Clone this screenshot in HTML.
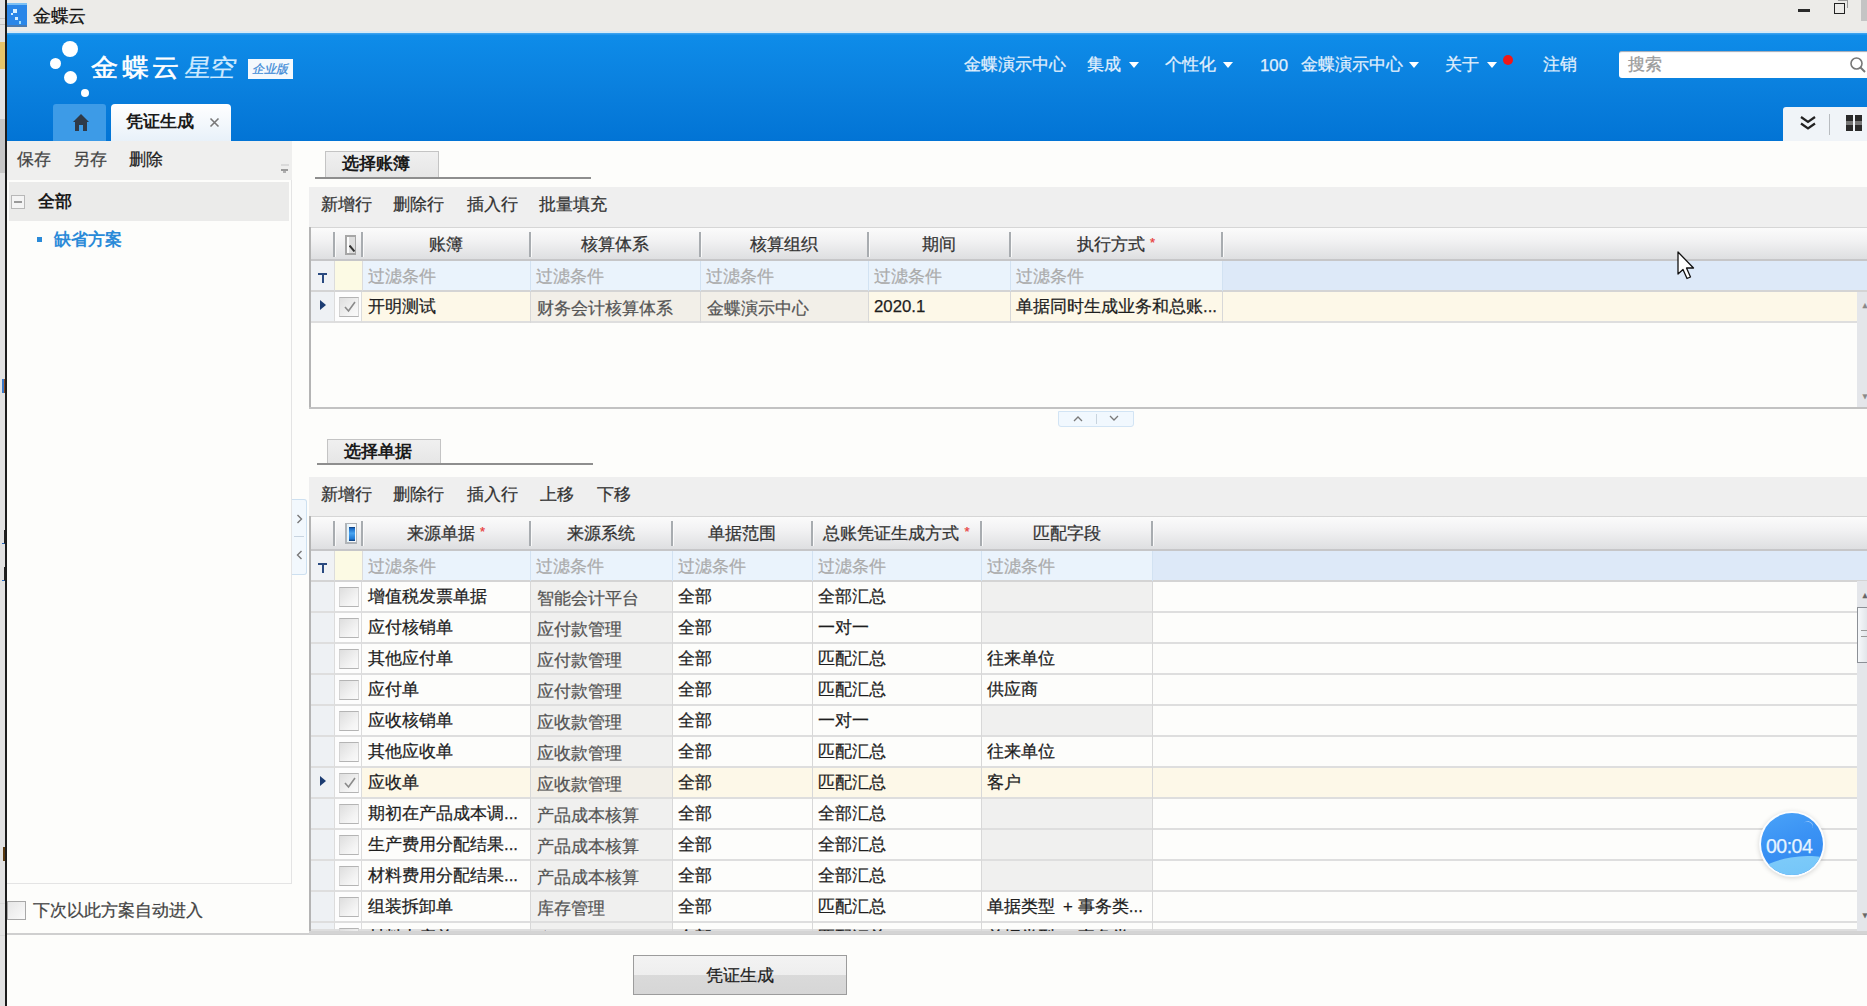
<!DOCTYPE html>
<html><head><meta charset="utf-8">
<style>
*{margin:0;padding:0;box-sizing:border-box}
html,body{width:1867px;height:1006px;overflow:hidden}
body{position:relative;background:#fdfdfb;font-family:"Liberation Sans",sans-serif;font-size:16.8px;color:#222}
.a{position:absolute}
.t{position:absolute;white-space:nowrap;line-height:1;-webkit-text-stroke:0.25px currentColor}
</style></head><body>

<!-- far-left background strip + window border -->
<div class="a" style="left:0;top:0;width:5px;height:1006px;background:#e2e2e2"></div>
<div class="a" style="left:0;top:42px;width:5px;height:27px;background:#e6c46a"></div><div class="a" style="left:0;top:119px;width:5px;height:54px;background:#c6c6c6"></div><div class="a" style="left:0;top:18px;width:5px;height:1px;background:#c4c4c4"></div><div class="a" style="left:0;top:24px;width:5px;height:1px;background:#c4c4c4"></div><div class="a" style="left:2px;top:379px;width:2px;height:14px;background:#3a78c8"></div><div class="a" style="left:4px;top:379px;width:1px;height:14px;background:#8a4a20"></div><div class="a" style="left:2px;top:530px;width:3px;height:14px;border-right:1px solid #222;border-bottom:1px solid #2a6ac0"></div><div class="a" style="left:2px;top:567px;width:3px;height:14px;border-right:1px solid #222;border-bottom:1px solid #2a6ac0"></div><div class="a" style="left:3px;top:847px;width:2px;height:14px;background:#5a3a10"></div><div class="a" style="left:0;top:903px;width:5px;height:1px;background:#d8d8d8"></div><div class="a" style="left:0;top:935px;width:5px;height:1px;background:#d8d8d8"></div>
<div class="a" style="left:5px;top:0;width:2px;height:1006px;background:#1c1c1c"></div>

<!-- title bar -->
<div class="a" style="left:7px;top:0;width:1860px;height:31px;background:#ecebe8"></div>
<div class="a" style="left:7px;top:31px;width:1860px;height:2px;background:#d6eaf6"></div>
<div class="a" style="left:7px;top:3px;width:20px;height:24px;background:linear-gradient(#7cc0f4 0,#7cc0f4 2px,#2a86e8 2px,#2a86e8 22px,#4a7ab0 22px)"></div><div class="a" style="left:13px;top:9px;width:4px;height:4px;background:#d8f0ff"></div><div class="a" style="left:11px;top:13px;width:2px;height:2px;background:#d8f0ff"></div><div class="a" style="left:15px;top:17px;width:3px;height:3px;background:#d8f0ff"></div><div class="a" style="left:19px;top:21px;width:2px;height:3px;background:#9ee0ff"></div>
<div class="t" style="left:33px;top:7px;font-size:18px;color:#111;letter-spacing:-0.3px">金蝶云</div>
<div class="a" style="left:1798px;top:9px;width:12px;height:3px;background:#2a2a2a"></div>
<div class="a" style="left:1838px;top:0px;width:10px;height:8px;border:1.5px solid #999;border-bottom:none;border-left:none"></div><div class="a" style="left:1834px;top:3px;width:11px;height:11px;border:1.5px solid #222;background:#ecebe8"></div>
<div class="a" style="left:1861px;top:0;width:6px;height:21px;background:#c4c4c4"></div>

<!-- blue header -->
<div class="a" style="left:7px;top:33px;width:1860px;height:108px;background:linear-gradient(#3aa2f0 0,#3aa2f0 1px,#0e8ce9 2px,#0a80de 50%,#0274d5 100%)"></div>


<!-- logo dots -->
<div class="a" style="left:62px;top:41px;width:16px;height:16px;border-radius:50%;background:#fff"></div>
<div class="a" style="left:50px;top:58px;width:11px;height:11px;border-radius:50%;background:#fff"></div>
<div class="a" style="left:64px;top:71px;width:13px;height:13px;border-radius:50%;background:#fff"></div>
<div class="a" style="left:81px;top:89px;width:8px;height:8px;border-radius:50%;background:#fff"></div>
<div class="t" style="left:91px;top:54px;font-size:27px;color:#fff;letter-spacing:3.5px;-webkit-text-stroke:0.6px #fff;transform:scaleY(0.92);transform-origin:0 80%">金蝶云</div>
<div class="t" style="left:184px;top:54px;font-size:26px;color:#cfeaff;letter-spacing:-1px;transform:skewX(-10deg) scaleY(0.93);transform-origin:0 80%;-webkit-text-stroke:0.3px #cfeaff">星空</div>
<div class="a" style="left:248px;top:59px;width:45px;height:20px;background:#f4f9fd"></div>
<div class="t" style="left:252px;top:63px;font-size:12px;color:#3d8ad6;font-style:italic">企业版</div>

<!-- nav -->
<div class="t" style="left:964px;top:57px;font-size:16.8px;color:#e2f0fd">金蝶演示中心</div>
<div class="t" style="left:1087px;top:57px;font-size:16.8px;color:#e2f0fd">集成</div>
<div class="a" style="left:1129px;top:62px;width:0;height:0;border-left:5.5px solid transparent;border-right:5.5px solid transparent;border-top:6px solid #fff"></div>
<div class="t" style="left:1165px;top:57px;font-size:16.8px;color:#e2f0fd">个性化</div>
<div class="a" style="left:1223px;top:62px;width:0;height:0;border-left:5.5px solid transparent;border-right:5.5px solid transparent;border-top:6px solid #fff"></div>
<div class="t" style="left:1260px;top:58px;font-size:16.8px;color:#e2f0fd">100</div>
<div class="t" style="left:1301px;top:57px;font-size:16.8px;color:#e2f0fd">金蝶演示中心</div>
<div class="a" style="left:1409px;top:62px;width:0;height:0;border-left:5.5px solid transparent;border-right:5.5px solid transparent;border-top:6px solid #fff"></div>
<div class="t" style="left:1445px;top:57px;font-size:16.8px;color:#e2f0fd">关于</div>
<div class="a" style="left:1487px;top:62px;width:0;height:0;border-left:5.5px solid transparent;border-right:5.5px solid transparent;border-top:6px solid #fff"></div>
<div class="a" style="left:1503px;top:55px;width:10px;height:10px;border-radius:50%;background:#f01818"></div>
<div class="t" style="left:1543px;top:57px;font-size:16.8px;color:#e2f0fd">注销</div>

<!-- search -->
<div class="a" style="left:1619px;top:51px;width:248px;height:27px;background:#fff;border-radius:3px 0 0 3px;box-shadow:inset 0 2px 1px -1px rgba(40,60,90,.45)"></div>
<div class="t" style="left:1628px;top:57px;font-size:16.8px;color:#9a9a9a">搜索</div>
<svg class="a" style="left:1849px;top:56px" width="18" height="18" viewBox="0 0 18 18"><circle cx="7.5" cy="7.5" r="5.5" fill="none" stroke="#777" stroke-width="1.6"/><line x1="11.5" y1="11.5" x2="16" y2="16" stroke="#777" stroke-width="2"/></svg>

<!-- tabs -->
<div class="a" style="left:53px;top:104px;width:53px;height:37px;background:#3d9be7;border-radius:3px 3px 0 0"></div>
<svg class="a" style="left:73px;top:114px" width="16" height="17" viewBox="0 0 16 17"><path d="M8 0 L0 8 L2 8 L2 17 L6 17 L6 11 L10 11 L10 17 L14 17 L14 8 L16 8 Z" fill="#2f3a48"/></svg>
<div class="a" style="left:111px;top:104px;width:120px;height:37px;background:linear-gradient(#ffffff,#e8f1f9);border-radius:4px 4px 0 0"></div>
<div class="t" style="left:126px;top:114px;font-size:16.8px;color:#1a1a1a;font-weight:bold;-webkit-text-stroke:0">凭证生成</div>
<svg class="a" style="left:209px;top:117px" width="11" height="11" viewBox="0 0 11 11"><path d="M1.5 1.5 L9.5 9.5 M9.5 1.5 L1.5 9.5" stroke="#777" stroke-width="1.6"/></svg>

<!-- right tool box -->
<div class="a" style="left:1783px;top:107px;width:84px;height:34px;background:#f0f4f8;border-radius:3px 0 0 0"></div>
<svg class="a" style="left:1800px;top:116px" width="16" height="15" viewBox="0 0 16 15"><path d="M1 1 L8 6 L15 1 M1 7.5 L8 12.5 L15 7.5" fill="none" stroke="#222" stroke-width="2.2"/></svg>
<div class="a" style="left:1829px;top:114px;width:1px;height:21px;background:#b8bcc0"></div>
<div class="a" style="left:1846px;top:115px;width:7px;height:16px;background:linear-gradient(#2a2a2a 40%,#777 40%,#777 60%,#2a2a2a 60%)"></div>
<div class="a" style="left:1855px;top:115px;width:7px;height:16px;background:linear-gradient(#2a2a2a 40%,#777 40%,#777 60%,#2a2a2a 60%)"></div>


<!-- LEFT PANEL -->
<div class="a" style="left:7px;top:141px;width:285px;height:39px;background:#efefee"></div>
<div class="t" style="left:17px;top:152px;color:#444">保存</div>
<div class="t" style="left:73px;top:152px;color:#444">另存</div>
<div class="t" style="left:129px;top:152px;color:#222">删除</div>
<div class="a" style="left:281px;top:164px;width:8px;height:2px;background:#dadada"></div><div class="a" style="left:281px;top:169px;width:7px;height:2px;background:#9a9a9a"></div><div class="a" style="left:283px;top:171px;width:3px;height:2px;background:#b0b0b0"></div>
<div class="a" style="left:7px;top:180px;width:285px;height:704px;border:1px solid #e4e4e4;border-top:none;border-left:none;background:#fdfdfb"></div>
<div class="a" style="left:9px;top:182px;width:280px;height:39px;background:#ebebea"></div>
<div class="a" style="left:11px;top:195px;width:14px;height:14px;border:1px solid #b8b8b8;background:#f4f4f4"></div>
<div class="a" style="left:14px;top:201px;width:8px;height:2px;background:#9a9a9a"></div>
<div class="t" style="left:38px;top:194px;color:#1a1a1a;font-weight:bold;-webkit-text-stroke:0">全部</div>
<div class="a" style="left:37px;top:237px;width:5px;height:5px;background:#2a8ad8"></div>
<div class="t" style="left:54px;top:232px;color:#2a8ad8;font-weight:bold;-webkit-text-stroke:0">缺省方案</div>
<div class="a" style="left:7px;top:901px;width:19px;height:19px;border:1px solid #a8a8a8;background:linear-gradient(135deg,#e6e6e6,#fafafa)"></div>
<div class="t" style="left:33px;top:903px;color:#444">下次以此方案自动进入</div>
<div class="a" style="left:7px;top:933px;width:1860px;height:2px;background:#cfcfcf"></div>

<!-- collapse side buttons -->
<div class="a" style="left:292px;top:499px;width:15px;height:76px;border:1px solid #cde0f0;border-left:none;background:#f2f8fd;border-radius:0 3px 3px 0"></div>
<svg class="a" style="left:296px;top:514px" width="7" height="10" viewBox="0 0 7 10"><path d="M1.5 1 L5.5 5 L1.5 9" fill="none" stroke="#777" stroke-width="1.4"/></svg>
<div class="a" style="left:294px;top:536px;width:10px;height:1px;background:#c8d4e0"></div>
<svg class="a" style="left:296px;top:550px" width="7" height="10" viewBox="0 0 7 10"><path d="M5.5 1 L1.5 5 L5.5 9" fill="none" stroke="#777" stroke-width="1.4"/></svg>

<!-- GRIDS -->
<div class="a" style="left:325px;top:151px;width:114px;height:26px;background:linear-gradient(#f0f0f0,#e6e6e6);border:1px solid #c4c4c4;border-bottom:none"></div>
<div class="t" style="left:342px;top:156px;color:#1a1a1a;font-weight:bold;-webkit-text-stroke:0">选择账簿</div>
<div class="a" style="left:315px;top:177px;width:276px;height:2px;background:#8e8e8e"></div>
<div class="a" style="left:309px;top:187px;width:1558px;height:40px;background:#efefef"></div>
<div class="t" style="left:321px;top:197px;color:#333">新增行</div>
<div class="t" style="left:393px;top:197px;color:#333">删除行</div>
<div class="t" style="left:467px;top:197px;color:#333">插入行</div>
<div class="t" style="left:539px;top:197px;color:#333">批量填充</div>
<div class="a" style="left:309px;top:227px;width:1558px;height:34px;background:linear-gradient(#fbfbfb,#f2f2f3 40%,#dedfe1);border-top:1px solid #d6d6d6;border-bottom:2px solid #c6c6c8"></div>
<div class="a" style="left:333px;top:232px;width:3px;height:25px;background:linear-gradient(90deg,#a8acb0 66%,#fafafa 66%)"></div>
<div class="a" style="left:361px;top:232px;width:3px;height:25px;background:linear-gradient(90deg,#a8acb0 66%,#fafafa 66%)"></div>
<div class="a" style="left:529px;top:232px;width:3px;height:25px;background:linear-gradient(90deg,#a8acb0 66%,#fafafa 66%)"></div>
<div class="a" style="left:699px;top:232px;width:3px;height:25px;background:linear-gradient(90deg,#a8acb0 66%,#fafafa 66%)"></div>
<div class="a" style="left:867px;top:232px;width:3px;height:25px;background:linear-gradient(90deg,#a8acb0 66%,#fafafa 66%)"></div>
<div class="a" style="left:1009px;top:232px;width:3px;height:25px;background:linear-gradient(90deg,#a8acb0 66%,#fafafa 66%)"></div>
<div class="a" style="left:1221px;top:232px;width:3px;height:25px;background:linear-gradient(90deg,#a8acb0 66%,#fafafa 66%)"></div>
<div class="a" style="left:345px;top:235px;width:11px;height:20px;border:2px solid #a6a6a6;border-right-width:1px;background:linear-gradient(90deg,#fdfdfd 0,#fdfdfd 2px,#dedede 2px)"></div>
<svg class="a" style="left:349px;top:245px" width="6" height="7" viewBox="0 0 6 7"><path d="M0.5 0.5 L5.5 6.5" stroke="#333" stroke-width="2"/></svg>
<div class="t" style="left:362px;width:168px;top:237px;text-align:center;color:#333">账簿</div>
<div class="t" style="left:530px;width:170px;top:237px;text-align:center;color:#333">核算体系</div>
<div class="t" style="left:700px;width:168px;top:237px;text-align:center;color:#333">核算组织</div>
<div class="t" style="left:868px;width:142px;top:237px;text-align:center;color:#333">期间</div>
<div class="t" style="left:1010px;width:212px;top:237px;text-align:center;color:#333">执行方式<span style="color:#e84040;font-size:13px;position:relative;top:-3px;margin-left:5px">*</span></div>
<div class="a" style="left:310px;top:261px;width:1557px;height:31px;background:#dde9f8;border-bottom:2px solid #d4d4d4"></div>
<div class="a" style="left:310px;top:261px;width:24px;height:31px;background:#f0f2f5;border-bottom:2px solid #d4d4d4"></div>
<div class="a" style="left:334px;top:261px;width:28px;height:31px;background:#fcfae4;border-left:1px solid #dcdcdc;border-bottom:2px solid #d4d4d4"></div>
<div class="a" style="left:362px;top:261px;width:860px;height:31px;background:#eaf3fc;border-left:1px solid #dcdcdc;border-bottom:2px solid #d4d4d4"></div>
<div class="a" style="left:530px;top:261px;width:1px;height:30px;background:#d2e2f2"></div>
<div class="a" style="left:700px;top:261px;width:1px;height:30px;background:#d2e2f2"></div>
<div class="a" style="left:868px;top:261px;width:1px;height:30px;background:#d2e2f2"></div>
<div class="a" style="left:1010px;top:261px;width:1px;height:30px;background:#d2e2f2"></div>
<div class="a" style="left:1222px;top:261px;width:1px;height:30px;background:#d2e2f2"></div>
<div class="a" style="left:318px;top:273px;width:9px;height:2px;background:#2a4a80"></div>
<div class="a" style="left:322px;top:273px;width:1.5px;height:10px;background:#2a4a80"></div>
<div class="t" style="left:368px;top:269px;color:#ababab">过滤条件</div>
<div class="t" style="left:536px;top:269px;color:#ababab">过滤条件</div>
<div class="t" style="left:706px;top:269px;color:#ababab">过滤条件</div>
<div class="t" style="left:874px;top:269px;color:#ababab">过滤条件</div>
<div class="t" style="left:1016px;top:269px;color:#ababab">过滤条件</div>
<div class="a" style="left:0;top:292px;width:1867px;height:115px;overflow:hidden"><div class="a" style="left:0;top:-292px;width:1867px;height:1006px">
<div class="a" style="left:310px;top:292px;width:1547px;height:31px;background:#fdf8e8;border-bottom:2px solid #dedede;overflow:hidden"></div>
<div class="a" style="left:310px;top:292px;width:24px;height:31px;background:#eef1f4;border-bottom:2px solid #dedede"></div>
<div class="a" style="left:334px;top:292px;width:28px;height:31px;background:#fdfdfd;border-left:1px solid #dcdcdc;border-right:1px solid #dcdcdc;border-bottom:2px solid #dedede"></div>
<div class="a" style="left:530px;top:292px;width:170px;height:31px;background:#f2efe8;border-bottom:2px solid #dedede"></div>
<div class="a" style="left:700px;top:292px;width:168px;height:31px;background:#f2efe8;border-bottom:2px solid #dedede"></div>
<div class="a" style="left:530px;top:292px;width:1px;height:31px;background:#d8d8d8"></div>
<div class="a" style="left:700px;top:292px;width:1px;height:31px;background:#d8d8d8"></div>
<div class="a" style="left:868px;top:292px;width:1px;height:31px;background:#d8d8d8"></div>
<div class="a" style="left:1010px;top:292px;width:1px;height:31px;background:#d8d8d8"></div>
<div class="a" style="left:1222px;top:292px;width:1px;height:31px;background:#d8d8d8"></div>
<div class="a" style="left:339px;top:297px;width:20px;height:20px;border:1px solid #d4d4d4;border-top-color:#b4b4b4;border-bottom-color:#b4b4b4;background:linear-gradient(135deg,#dedede,#f4f4f4 70%,#fafafa)"></div>
<svg class="a" style="left:343px;top:300px" width="14" height="14" viewBox="0 0 14 14"><path d="M2 7 L5.5 11 L12 2" fill="none" stroke="#8a8a8a" stroke-width="1.6"/></svg>
<div class="a" style="left:320px;top:300px;width:0;height:0;border-top:5px solid transparent;border-bottom:5px solid transparent;border-left:6px solid #1c3c72"></div>
<div class="t" style="left:368px;top:299px;color:#1e1e1e">开明测试</div>
<div class="t" style="left:537px;top:301px;color:#555">财务会计核算体系</div>
<div class="t" style="left:707px;top:301px;color:#555">金蝶演示中心</div>
<div class="t" style="left:874px;top:299px;color:#1e1e1e">2020.1</div>
<div class="t" style="left:1016px;top:299px;color:#1e1e1e">单据同时生成业务和总账...</div>
</div></div>
<div class="a" style="left:309px;top:227px;width:2px;height:181px;background:#b4b4b4"></div>
<div class="a" style="left:309px;top:407px;width:1558px;height:2px;background:#c2c2c2"></div>
<div class="a" style="left:1857px;top:292px;width:10px;height:115px;background:#e4e6ea"></div>
<div class="t" style="left:1861px;top:302px;font-size:8px;color:#888">▲</div>
<div class="t" style="left:1861px;top:393px;font-size:8px;color:#888">▼</div>
<div class="a" style="left:1058px;top:411px;width:76px;height:16px;border:1px solid #d2e4f4;background:#f1f8fe;border-radius:0 0 3px 3px"></div>
<svg class="a" style="left:1073px;top:415px" width="10" height="7" viewBox="0 0 10 7"><path d="M1 6 L5 2 L9 6" fill="none" stroke="#7a7a7a" stroke-width="1.3"/></svg>
<div class="a" style="left:1096px;top:414px;width:1px;height:10px;background:#c8d4de"></div>
<svg class="a" style="left:1109px;top:415px" width="10" height="7" viewBox="0 0 10 7"><path d="M1 1 L5 5 L9 1" fill="none" stroke="#7a7a7a" stroke-width="1.3"/></svg>
<div class="a" style="left:327px;top:439px;width:114px;height:24px;background:linear-gradient(#f0f0f0,#e6e6e6);border:1px solid #c4c4c4;border-bottom:none"></div>
<div class="t" style="left:344px;top:444px;color:#1a1a1a;font-weight:bold;-webkit-text-stroke:0">选择单据</div>
<div class="a" style="left:317px;top:463px;width:276px;height:2px;background:#8e8e8e"></div>
<div class="a" style="left:309px;top:477px;width:1558px;height:40px;background:#efefef"></div>
<div class="t" style="left:321px;top:487px;color:#333">新增行</div>
<div class="t" style="left:393px;top:487px;color:#333">删除行</div>
<div class="t" style="left:467px;top:487px;color:#333">插入行</div>
<div class="t" style="left:540px;top:487px;color:#333">上移</div>
<div class="t" style="left:597px;top:487px;color:#333">下移</div>
<div class="a" style="left:309px;top:516px;width:1558px;height:35px;background:linear-gradient(#fbfbfb,#f2f2f3 40%,#dedfe1);border-top:1px solid #d6d6d6;border-bottom:2px solid #c6c6c8"></div>
<div class="a" style="left:333px;top:521px;width:3px;height:25px;background:linear-gradient(90deg,#a8acb0 66%,#fafafa 66%)"></div>
<div class="a" style="left:361px;top:521px;width:3px;height:25px;background:linear-gradient(90deg,#a8acb0 66%,#fafafa 66%)"></div>
<div class="a" style="left:529px;top:521px;width:3px;height:25px;background:linear-gradient(90deg,#a8acb0 66%,#fafafa 66%)"></div>
<div class="a" style="left:671px;top:521px;width:3px;height:25px;background:linear-gradient(90deg,#a8acb0 66%,#fafafa 66%)"></div>
<div class="a" style="left:811px;top:521px;width:3px;height:25px;background:linear-gradient(90deg,#a8acb0 66%,#fafafa 66%)"></div>
<div class="a" style="left:980px;top:521px;width:3px;height:25px;background:linear-gradient(90deg,#a8acb0 66%,#fafafa 66%)"></div>
<div class="a" style="left:1151px;top:521px;width:3px;height:25px;background:linear-gradient(90deg,#a8acb0 66%,#fafafa 66%)"></div>
<div class="a" style="left:345px;top:523px;width:12px;height:21px;border:1px solid #b0b4b8;border-left-width:2px;border-bottom-width:2px;background:linear-gradient(90deg,#e4f4fc 0,#e4f4fc 2px,#f4f8fb 2px)"></div>
<div class="a" style="left:349px;top:527px;width:6px;height:14px;background:linear-gradient(#0c3670 0,#1a6cc8 12%,#4aa4f0 45%,#1e78d4 85%,#0c3670 100%)"></div>
<div class="t" style="left:362px;width:168px;top:526px;text-align:center;color:#333">来源单据<span style="color:#e84040;font-size:13px;position:relative;top:-3px;margin-left:5px">*</span></div>
<div class="t" style="left:530px;width:142px;top:526px;text-align:center;color:#333">来源系统</div>
<div class="t" style="left:672px;width:140px;top:526px;text-align:center;color:#333">单据范围</div>
<div class="t" style="left:812px;width:169px;top:526px;text-align:center;color:#333">总账凭证生成方式<span style="color:#e84040;font-size:13px;position:relative;top:-3px;margin-left:5px">*</span></div>
<div class="t" style="left:981px;width:171px;top:526px;text-align:center;color:#333">匹配字段</div>
<div class="a" style="left:310px;top:551px;width:1557px;height:31px;background:#dde9f8;border-bottom:2px solid #d4d4d4"></div>
<div class="a" style="left:310px;top:551px;width:24px;height:31px;background:#f0f2f5;border-bottom:2px solid #d4d4d4"></div>
<div class="a" style="left:334px;top:551px;width:28px;height:31px;background:#fcfae4;border-left:1px solid #dcdcdc;border-bottom:2px solid #d4d4d4"></div>
<div class="a" style="left:362px;top:551px;width:790px;height:31px;background:#eaf3fc;border-left:1px solid #dcdcdc;border-bottom:2px solid #d4d4d4"></div>
<div class="a" style="left:530px;top:551px;width:1px;height:30px;background:#d2e2f2"></div>
<div class="a" style="left:672px;top:551px;width:1px;height:30px;background:#d2e2f2"></div>
<div class="a" style="left:812px;top:551px;width:1px;height:30px;background:#d2e2f2"></div>
<div class="a" style="left:981px;top:551px;width:1px;height:30px;background:#d2e2f2"></div>
<div class="a" style="left:1152px;top:551px;width:1px;height:30px;background:#d2e2f2"></div>
<div class="a" style="left:318px;top:563px;width:9px;height:2px;background:#2a4a80"></div>
<div class="a" style="left:322px;top:563px;width:1.5px;height:10px;background:#2a4a80"></div>
<div class="t" style="left:368px;top:559px;color:#ababab">过滤条件</div>
<div class="t" style="left:536px;top:559px;color:#ababab">过滤条件</div>
<div class="t" style="left:678px;top:559px;color:#ababab">过滤条件</div>
<div class="t" style="left:818px;top:559px;color:#ababab">过滤条件</div>
<div class="t" style="left:987px;top:559px;color:#ababab">过滤条件</div>
<div class="a" style="left:0;top:582px;width:1867px;height:349px;overflow:hidden"><div class="a" style="left:0;top:-582px;width:1867px;height:1006px">
<div class="a" style="left:310px;top:582px;width:1547px;height:31px;background:#fdfdfb;border-bottom:2px solid #dedede;overflow:hidden"></div>
<div class="a" style="left:310px;top:582px;width:24px;height:31px;background:#eef1f4;border-bottom:2px solid #dedede"></div>
<div class="a" style="left:334px;top:582px;width:28px;height:31px;background:#fdfdfd;border-left:1px solid #dcdcdc;border-right:1px solid #dcdcdc;border-bottom:2px solid #dedede"></div>
<div class="a" style="left:530px;top:582px;width:142px;height:31px;background:#f0f0ef;border-bottom:2px solid #dedede"></div>
<div class="a" style="left:981px;top:582px;width:171px;height:31px;background:#f0f0ef;border-bottom:2px solid #dedede"></div>
<div class="a" style="left:530px;top:582px;width:1px;height:31px;background:#d8d8d8"></div>
<div class="a" style="left:672px;top:582px;width:1px;height:31px;background:#d8d8d8"></div>
<div class="a" style="left:812px;top:582px;width:1px;height:31px;background:#d8d8d8"></div>
<div class="a" style="left:981px;top:582px;width:1px;height:31px;background:#d8d8d8"></div>
<div class="a" style="left:1152px;top:582px;width:1px;height:31px;background:#d8d8d8"></div>
<div class="a" style="left:339px;top:587px;width:20px;height:20px;border:1px solid #d4d4d4;border-top-color:#b4b4b4;border-bottom-color:#b4b4b4;background:linear-gradient(135deg,#dedede,#f4f4f4 70%,#fafafa)"></div>
<div class="t" style="left:368px;top:589px;color:#1e1e1e">增值税发票单据</div>
<div class="t" style="left:537px;top:591px;color:#555">智能会计平台</div>
<div class="t" style="left:678px;top:589px;color:#1e1e1e">全部</div>
<div class="t" style="left:818px;top:589px;color:#1e1e1e">全部汇总</div>
<div class="a" style="left:310px;top:613px;width:1547px;height:31px;background:#fdfdfb;border-bottom:2px solid #dedede;overflow:hidden"></div>
<div class="a" style="left:310px;top:613px;width:24px;height:31px;background:#eef1f4;border-bottom:2px solid #dedede"></div>
<div class="a" style="left:334px;top:613px;width:28px;height:31px;background:#fdfdfd;border-left:1px solid #dcdcdc;border-right:1px solid #dcdcdc;border-bottom:2px solid #dedede"></div>
<div class="a" style="left:530px;top:613px;width:142px;height:31px;background:#f0f0ef;border-bottom:2px solid #dedede"></div>
<div class="a" style="left:981px;top:613px;width:171px;height:31px;background:#f0f0ef;border-bottom:2px solid #dedede"></div>
<div class="a" style="left:530px;top:613px;width:1px;height:31px;background:#d8d8d8"></div>
<div class="a" style="left:672px;top:613px;width:1px;height:31px;background:#d8d8d8"></div>
<div class="a" style="left:812px;top:613px;width:1px;height:31px;background:#d8d8d8"></div>
<div class="a" style="left:981px;top:613px;width:1px;height:31px;background:#d8d8d8"></div>
<div class="a" style="left:1152px;top:613px;width:1px;height:31px;background:#d8d8d8"></div>
<div class="a" style="left:339px;top:618px;width:20px;height:20px;border:1px solid #d4d4d4;border-top-color:#b4b4b4;border-bottom-color:#b4b4b4;background:linear-gradient(135deg,#dedede,#f4f4f4 70%,#fafafa)"></div>
<div class="t" style="left:368px;top:620px;color:#1e1e1e">应付核销单</div>
<div class="t" style="left:537px;top:622px;color:#555">应付款管理</div>
<div class="t" style="left:678px;top:620px;color:#1e1e1e">全部</div>
<div class="t" style="left:818px;top:620px;color:#1e1e1e">一对一</div>
<div class="a" style="left:310px;top:644px;width:1547px;height:31px;background:#fdfdfb;border-bottom:2px solid #dedede;overflow:hidden"></div>
<div class="a" style="left:310px;top:644px;width:24px;height:31px;background:#eef1f4;border-bottom:2px solid #dedede"></div>
<div class="a" style="left:334px;top:644px;width:28px;height:31px;background:#fdfdfd;border-left:1px solid #dcdcdc;border-right:1px solid #dcdcdc;border-bottom:2px solid #dedede"></div>
<div class="a" style="left:530px;top:644px;width:142px;height:31px;background:#f0f0ef;border-bottom:2px solid #dedede"></div>
<div class="a" style="left:530px;top:644px;width:1px;height:31px;background:#d8d8d8"></div>
<div class="a" style="left:672px;top:644px;width:1px;height:31px;background:#d8d8d8"></div>
<div class="a" style="left:812px;top:644px;width:1px;height:31px;background:#d8d8d8"></div>
<div class="a" style="left:981px;top:644px;width:1px;height:31px;background:#d8d8d8"></div>
<div class="a" style="left:1152px;top:644px;width:1px;height:31px;background:#d8d8d8"></div>
<div class="a" style="left:339px;top:649px;width:20px;height:20px;border:1px solid #d4d4d4;border-top-color:#b4b4b4;border-bottom-color:#b4b4b4;background:linear-gradient(135deg,#dedede,#f4f4f4 70%,#fafafa)"></div>
<div class="t" style="left:368px;top:651px;color:#1e1e1e">其他应付单</div>
<div class="t" style="left:537px;top:653px;color:#555">应付款管理</div>
<div class="t" style="left:678px;top:651px;color:#1e1e1e">全部</div>
<div class="t" style="left:818px;top:651px;color:#1e1e1e">匹配汇总</div>
<div class="t" style="left:987px;top:651px;color:#1e1e1e">往来单位</div>
<div class="a" style="left:310px;top:675px;width:1547px;height:31px;background:#fdfdfb;border-bottom:2px solid #dedede;overflow:hidden"></div>
<div class="a" style="left:310px;top:675px;width:24px;height:31px;background:#eef1f4;border-bottom:2px solid #dedede"></div>
<div class="a" style="left:334px;top:675px;width:28px;height:31px;background:#fdfdfd;border-left:1px solid #dcdcdc;border-right:1px solid #dcdcdc;border-bottom:2px solid #dedede"></div>
<div class="a" style="left:530px;top:675px;width:142px;height:31px;background:#f0f0ef;border-bottom:2px solid #dedede"></div>
<div class="a" style="left:530px;top:675px;width:1px;height:31px;background:#d8d8d8"></div>
<div class="a" style="left:672px;top:675px;width:1px;height:31px;background:#d8d8d8"></div>
<div class="a" style="left:812px;top:675px;width:1px;height:31px;background:#d8d8d8"></div>
<div class="a" style="left:981px;top:675px;width:1px;height:31px;background:#d8d8d8"></div>
<div class="a" style="left:1152px;top:675px;width:1px;height:31px;background:#d8d8d8"></div>
<div class="a" style="left:339px;top:680px;width:20px;height:20px;border:1px solid #d4d4d4;border-top-color:#b4b4b4;border-bottom-color:#b4b4b4;background:linear-gradient(135deg,#dedede,#f4f4f4 70%,#fafafa)"></div>
<div class="t" style="left:368px;top:682px;color:#1e1e1e">应付单</div>
<div class="t" style="left:537px;top:684px;color:#555">应付款管理</div>
<div class="t" style="left:678px;top:682px;color:#1e1e1e">全部</div>
<div class="t" style="left:818px;top:682px;color:#1e1e1e">匹配汇总</div>
<div class="t" style="left:987px;top:682px;color:#1e1e1e">供应商</div>
<div class="a" style="left:310px;top:706px;width:1547px;height:31px;background:#fdfdfb;border-bottom:2px solid #dedede;overflow:hidden"></div>
<div class="a" style="left:310px;top:706px;width:24px;height:31px;background:#eef1f4;border-bottom:2px solid #dedede"></div>
<div class="a" style="left:334px;top:706px;width:28px;height:31px;background:#fdfdfd;border-left:1px solid #dcdcdc;border-right:1px solid #dcdcdc;border-bottom:2px solid #dedede"></div>
<div class="a" style="left:530px;top:706px;width:142px;height:31px;background:#f0f0ef;border-bottom:2px solid #dedede"></div>
<div class="a" style="left:981px;top:706px;width:171px;height:31px;background:#f0f0ef;border-bottom:2px solid #dedede"></div>
<div class="a" style="left:530px;top:706px;width:1px;height:31px;background:#d8d8d8"></div>
<div class="a" style="left:672px;top:706px;width:1px;height:31px;background:#d8d8d8"></div>
<div class="a" style="left:812px;top:706px;width:1px;height:31px;background:#d8d8d8"></div>
<div class="a" style="left:981px;top:706px;width:1px;height:31px;background:#d8d8d8"></div>
<div class="a" style="left:1152px;top:706px;width:1px;height:31px;background:#d8d8d8"></div>
<div class="a" style="left:339px;top:711px;width:20px;height:20px;border:1px solid #d4d4d4;border-top-color:#b4b4b4;border-bottom-color:#b4b4b4;background:linear-gradient(135deg,#dedede,#f4f4f4 70%,#fafafa)"></div>
<div class="t" style="left:368px;top:713px;color:#1e1e1e">应收核销单</div>
<div class="t" style="left:537px;top:715px;color:#555">应收款管理</div>
<div class="t" style="left:678px;top:713px;color:#1e1e1e">全部</div>
<div class="t" style="left:818px;top:713px;color:#1e1e1e">一对一</div>
<div class="a" style="left:310px;top:737px;width:1547px;height:31px;background:#fdfdfb;border-bottom:2px solid #dedede;overflow:hidden"></div>
<div class="a" style="left:310px;top:737px;width:24px;height:31px;background:#eef1f4;border-bottom:2px solid #dedede"></div>
<div class="a" style="left:334px;top:737px;width:28px;height:31px;background:#fdfdfd;border-left:1px solid #dcdcdc;border-right:1px solid #dcdcdc;border-bottom:2px solid #dedede"></div>
<div class="a" style="left:530px;top:737px;width:142px;height:31px;background:#f0f0ef;border-bottom:2px solid #dedede"></div>
<div class="a" style="left:530px;top:737px;width:1px;height:31px;background:#d8d8d8"></div>
<div class="a" style="left:672px;top:737px;width:1px;height:31px;background:#d8d8d8"></div>
<div class="a" style="left:812px;top:737px;width:1px;height:31px;background:#d8d8d8"></div>
<div class="a" style="left:981px;top:737px;width:1px;height:31px;background:#d8d8d8"></div>
<div class="a" style="left:1152px;top:737px;width:1px;height:31px;background:#d8d8d8"></div>
<div class="a" style="left:339px;top:742px;width:20px;height:20px;border:1px solid #d4d4d4;border-top-color:#b4b4b4;border-bottom-color:#b4b4b4;background:linear-gradient(135deg,#dedede,#f4f4f4 70%,#fafafa)"></div>
<div class="t" style="left:368px;top:744px;color:#1e1e1e">其他应收单</div>
<div class="t" style="left:537px;top:746px;color:#555">应收款管理</div>
<div class="t" style="left:678px;top:744px;color:#1e1e1e">全部</div>
<div class="t" style="left:818px;top:744px;color:#1e1e1e">匹配汇总</div>
<div class="t" style="left:987px;top:744px;color:#1e1e1e">往来单位</div>
<div class="a" style="left:310px;top:768px;width:1547px;height:31px;background:#fdf8e8;border-bottom:2px solid #dedede;overflow:hidden"></div>
<div class="a" style="left:310px;top:768px;width:24px;height:31px;background:#eef1f4;border-bottom:2px solid #dedede"></div>
<div class="a" style="left:334px;top:768px;width:28px;height:31px;background:#fdfdfd;border-left:1px solid #dcdcdc;border-right:1px solid #dcdcdc;border-bottom:2px solid #dedede"></div>
<div class="a" style="left:530px;top:768px;width:142px;height:31px;background:#f2efe8;border-bottom:2px solid #dedede"></div>
<div class="a" style="left:530px;top:768px;width:1px;height:31px;background:#d8d8d8"></div>
<div class="a" style="left:672px;top:768px;width:1px;height:31px;background:#d8d8d8"></div>
<div class="a" style="left:812px;top:768px;width:1px;height:31px;background:#d8d8d8"></div>
<div class="a" style="left:981px;top:768px;width:1px;height:31px;background:#d8d8d8"></div>
<div class="a" style="left:1152px;top:768px;width:1px;height:31px;background:#d8d8d8"></div>
<div class="a" style="left:339px;top:773px;width:20px;height:20px;border:1px solid #d4d4d4;border-top-color:#b4b4b4;border-bottom-color:#b4b4b4;background:linear-gradient(135deg,#dedede,#f4f4f4 70%,#fafafa)"></div>
<svg class="a" style="left:343px;top:776px" width="14" height="14" viewBox="0 0 14 14"><path d="M2 7 L5.5 11 L12 2" fill="none" stroke="#8a8a8a" stroke-width="1.6"/></svg>
<div class="a" style="left:320px;top:776px;width:0;height:0;border-top:5px solid transparent;border-bottom:5px solid transparent;border-left:6px solid #1c3c72"></div>
<div class="t" style="left:368px;top:775px;color:#1e1e1e">应收单</div>
<div class="t" style="left:537px;top:777px;color:#555">应收款管理</div>
<div class="t" style="left:678px;top:775px;color:#1e1e1e">全部</div>
<div class="t" style="left:818px;top:775px;color:#1e1e1e">匹配汇总</div>
<div class="t" style="left:987px;top:775px;color:#1e1e1e">客户</div>
<div class="a" style="left:310px;top:799px;width:1547px;height:31px;background:#fdfdfb;border-bottom:2px solid #dedede;overflow:hidden"></div>
<div class="a" style="left:310px;top:799px;width:24px;height:31px;background:#eef1f4;border-bottom:2px solid #dedede"></div>
<div class="a" style="left:334px;top:799px;width:28px;height:31px;background:#fdfdfd;border-left:1px solid #dcdcdc;border-right:1px solid #dcdcdc;border-bottom:2px solid #dedede"></div>
<div class="a" style="left:530px;top:799px;width:142px;height:31px;background:#f0f0ef;border-bottom:2px solid #dedede"></div>
<div class="a" style="left:981px;top:799px;width:171px;height:31px;background:#f0f0ef;border-bottom:2px solid #dedede"></div>
<div class="a" style="left:530px;top:799px;width:1px;height:31px;background:#d8d8d8"></div>
<div class="a" style="left:672px;top:799px;width:1px;height:31px;background:#d8d8d8"></div>
<div class="a" style="left:812px;top:799px;width:1px;height:31px;background:#d8d8d8"></div>
<div class="a" style="left:981px;top:799px;width:1px;height:31px;background:#d8d8d8"></div>
<div class="a" style="left:1152px;top:799px;width:1px;height:31px;background:#d8d8d8"></div>
<div class="a" style="left:339px;top:804px;width:20px;height:20px;border:1px solid #d4d4d4;border-top-color:#b4b4b4;border-bottom-color:#b4b4b4;background:linear-gradient(135deg,#dedede,#f4f4f4 70%,#fafafa)"></div>
<div class="t" style="left:368px;top:806px;color:#1e1e1e">期初在产品成本调...</div>
<div class="t" style="left:537px;top:808px;color:#555">产品成本核算</div>
<div class="t" style="left:678px;top:806px;color:#1e1e1e">全部</div>
<div class="t" style="left:818px;top:806px;color:#1e1e1e">全部汇总</div>
<div class="a" style="left:310px;top:830px;width:1547px;height:31px;background:#fdfdfb;border-bottom:2px solid #dedede;overflow:hidden"></div>
<div class="a" style="left:310px;top:830px;width:24px;height:31px;background:#eef1f4;border-bottom:2px solid #dedede"></div>
<div class="a" style="left:334px;top:830px;width:28px;height:31px;background:#fdfdfd;border-left:1px solid #dcdcdc;border-right:1px solid #dcdcdc;border-bottom:2px solid #dedede"></div>
<div class="a" style="left:530px;top:830px;width:142px;height:31px;background:#f0f0ef;border-bottom:2px solid #dedede"></div>
<div class="a" style="left:981px;top:830px;width:171px;height:31px;background:#f0f0ef;border-bottom:2px solid #dedede"></div>
<div class="a" style="left:530px;top:830px;width:1px;height:31px;background:#d8d8d8"></div>
<div class="a" style="left:672px;top:830px;width:1px;height:31px;background:#d8d8d8"></div>
<div class="a" style="left:812px;top:830px;width:1px;height:31px;background:#d8d8d8"></div>
<div class="a" style="left:981px;top:830px;width:1px;height:31px;background:#d8d8d8"></div>
<div class="a" style="left:1152px;top:830px;width:1px;height:31px;background:#d8d8d8"></div>
<div class="a" style="left:339px;top:835px;width:20px;height:20px;border:1px solid #d4d4d4;border-top-color:#b4b4b4;border-bottom-color:#b4b4b4;background:linear-gradient(135deg,#dedede,#f4f4f4 70%,#fafafa)"></div>
<div class="t" style="left:368px;top:837px;color:#1e1e1e">生产费用分配结果...</div>
<div class="t" style="left:537px;top:839px;color:#555">产品成本核算</div>
<div class="t" style="left:678px;top:837px;color:#1e1e1e">全部</div>
<div class="t" style="left:818px;top:837px;color:#1e1e1e">全部汇总</div>
<div class="a" style="left:310px;top:861px;width:1547px;height:31px;background:#fdfdfb;border-bottom:2px solid #dedede;overflow:hidden"></div>
<div class="a" style="left:310px;top:861px;width:24px;height:31px;background:#eef1f4;border-bottom:2px solid #dedede"></div>
<div class="a" style="left:334px;top:861px;width:28px;height:31px;background:#fdfdfd;border-left:1px solid #dcdcdc;border-right:1px solid #dcdcdc;border-bottom:2px solid #dedede"></div>
<div class="a" style="left:530px;top:861px;width:142px;height:31px;background:#f0f0ef;border-bottom:2px solid #dedede"></div>
<div class="a" style="left:981px;top:861px;width:171px;height:31px;background:#f0f0ef;border-bottom:2px solid #dedede"></div>
<div class="a" style="left:530px;top:861px;width:1px;height:31px;background:#d8d8d8"></div>
<div class="a" style="left:672px;top:861px;width:1px;height:31px;background:#d8d8d8"></div>
<div class="a" style="left:812px;top:861px;width:1px;height:31px;background:#d8d8d8"></div>
<div class="a" style="left:981px;top:861px;width:1px;height:31px;background:#d8d8d8"></div>
<div class="a" style="left:1152px;top:861px;width:1px;height:31px;background:#d8d8d8"></div>
<div class="a" style="left:339px;top:866px;width:20px;height:20px;border:1px solid #d4d4d4;border-top-color:#b4b4b4;border-bottom-color:#b4b4b4;background:linear-gradient(135deg,#dedede,#f4f4f4 70%,#fafafa)"></div>
<div class="t" style="left:368px;top:868px;color:#1e1e1e">材料费用分配结果...</div>
<div class="t" style="left:537px;top:870px;color:#555">产品成本核算</div>
<div class="t" style="left:678px;top:868px;color:#1e1e1e">全部</div>
<div class="t" style="left:818px;top:868px;color:#1e1e1e">全部汇总</div>
<div class="a" style="left:310px;top:892px;width:1547px;height:31px;background:#fdfdfb;border-bottom:2px solid #dedede;overflow:hidden"></div>
<div class="a" style="left:310px;top:892px;width:24px;height:31px;background:#eef1f4;border-bottom:2px solid #dedede"></div>
<div class="a" style="left:334px;top:892px;width:28px;height:31px;background:#fdfdfd;border-left:1px solid #dcdcdc;border-right:1px solid #dcdcdc;border-bottom:2px solid #dedede"></div>
<div class="a" style="left:530px;top:892px;width:142px;height:31px;background:#f0f0ef;border-bottom:2px solid #dedede"></div>
<div class="a" style="left:530px;top:892px;width:1px;height:31px;background:#d8d8d8"></div>
<div class="a" style="left:672px;top:892px;width:1px;height:31px;background:#d8d8d8"></div>
<div class="a" style="left:812px;top:892px;width:1px;height:31px;background:#d8d8d8"></div>
<div class="a" style="left:981px;top:892px;width:1px;height:31px;background:#d8d8d8"></div>
<div class="a" style="left:1152px;top:892px;width:1px;height:31px;background:#d8d8d8"></div>
<div class="a" style="left:339px;top:897px;width:20px;height:20px;border:1px solid #d4d4d4;border-top-color:#b4b4b4;border-bottom-color:#b4b4b4;background:linear-gradient(135deg,#dedede,#f4f4f4 70%,#fafafa)"></div>
<div class="t" style="left:368px;top:899px;color:#1e1e1e">组装拆卸单</div>
<div class="t" style="left:537px;top:901px;color:#555">库存管理</div>
<div class="t" style="left:678px;top:899px;color:#1e1e1e">全部</div>
<div class="t" style="left:818px;top:899px;color:#1e1e1e">匹配汇总</div>
<div class="t" style="left:987px;top:899px;color:#1e1e1e">单据类型<span style="margin:0 5px 0 8px">+</span>事务类...</div>
<div class="a" style="left:310px;top:923px;width:1547px;height:8px;background:#fdfdfb;border-bottom:2px solid #dedede;overflow:hidden"></div>
<div class="a" style="left:310px;top:923px;width:24px;height:8px;background:#eef1f4;border-bottom:2px solid #dedede"></div>
<div class="a" style="left:334px;top:923px;width:28px;height:8px;background:#fdfdfd;border-left:1px solid #dcdcdc;border-right:1px solid #dcdcdc;border-bottom:2px solid #dedede"></div>
<div class="a" style="left:530px;top:923px;width:142px;height:8px;background:#f0f0ef;border-bottom:2px solid #dedede"></div>
<div class="a" style="left:530px;top:923px;width:1px;height:8px;background:#d8d8d8"></div>
<div class="a" style="left:672px;top:923px;width:1px;height:8px;background:#d8d8d8"></div>
<div class="a" style="left:812px;top:923px;width:1px;height:8px;background:#d8d8d8"></div>
<div class="a" style="left:981px;top:923px;width:1px;height:8px;background:#d8d8d8"></div>
<div class="a" style="left:1152px;top:923px;width:1px;height:8px;background:#d8d8d8"></div>
<div class="a" style="left:339px;top:928px;width:20px;height:20px;border:1px solid #d4d4d4;border-top-color:#b4b4b4;border-bottom-color:#b4b4b4;background:linear-gradient(135deg,#dedede,#f4f4f4 70%,#fafafa)"></div>
<div class="t" style="left:368px;top:930px;color:#1e1e1e">材料出库单</div>
<div class="t" style="left:537px;top:932px;color:#555">库存管理</div>
<div class="t" style="left:678px;top:930px;color:#1e1e1e">全部</div>
<div class="t" style="left:818px;top:930px;color:#1e1e1e">匹配汇总</div>
<div class="t" style="left:987px;top:930px;color:#1e1e1e">单据类型<span style="margin:0 5px 0 8px">+</span>事务类...</div>
</div></div>
<div class="a" style="left:309px;top:516px;width:2px;height:416px;background:#b4b4b4"></div>
<div class="a" style="left:309px;top:931px;width:1558px;height:3px;background:#d4d4d4"></div>
<div class="a" style="left:1857px;top:581px;width:10px;height:350px;background:#e4e6ea"></div>
<div class="a" style="left:1857px;top:607px;width:10px;height:56px;border:1px solid #8c9096;border-right:none;background:linear-gradient(90deg,#f6f8fa,#e2e6ea)"></div>
<div class="a" style="left:1861px;top:630px;width:6px;height:1px;background:#999"></div>
<div class="a" style="left:1861px;top:636px;width:6px;height:1px;background:#999"></div>
<div class="t" style="left:1861px;top:592px;font-size:8px;color:#666">▲</div>
<div class="t" style="left:1861px;top:912px;font-size:8px;color:#666">▼</div>
<div class="a" style="left:1759px;top:811px;width:66px;height:66px;border-radius:50%;background:#fbfdff;box-shadow:0 1px 5px rgba(0,0,0,.16)"></div>
<div class="a" style="left:1761px;top:813px;width:62px;height:62px;border-radius:50%;overflow:hidden;background:linear-gradient(160deg,#4aa3f8 0%,#3a92f4 45%,#2f86ee 100%)"><div style="position:absolute;left:-20px;top:44px;width:110px;height:60px;border-radius:50%;background:linear-gradient(#7ccaf9,#66bdf8);transform:rotate(-10deg)"></div><div style="position:absolute;left:42px;top:8px;width:10px;height:10px;border-radius:50%;border-top:1.5px solid rgba(255,255,255,.45);transform:rotate(30deg)"></div></div>
<div class="t" style="left:1766px;top:837px;font-size:19.5px;color:#e6f4ff;letter-spacing:-0.5px">00:04</div>
<!-- /GRIDS -->

<!-- mouse cursor -->
<svg class="a" style="left:1677px;top:251px" width="19" height="30" viewBox="0 0 19 30"><path d="M1 1 L1 23 L6 18.5 L10 27.5 L13.5 26 L9.5 17 L16.5 17 Z" fill="#fff" stroke="#111" stroke-width="1.3" stroke-linejoin="round"/></svg>
<!-- bottom button -->
<div class="a" style="left:633px;top:955px;width:214px;height:40px;border:1px solid #9c9c9c;background:linear-gradient(#f3f3f3 0,#eeeeee 50%,#dadada 50%,#d6d6d6 100%)"></div>
<div class="t" style="left:706px;top:968px;color:#222">凭证生成</div>

</body></html>
